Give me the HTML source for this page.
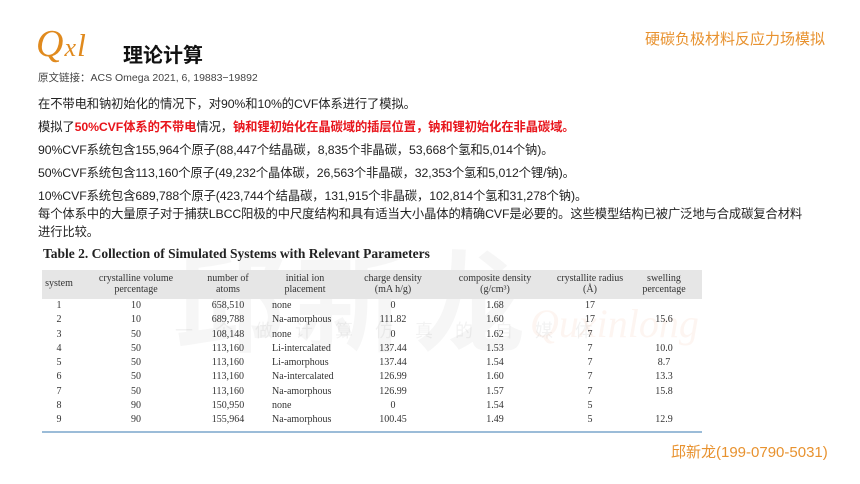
<!DOCTYPE html>
<html><head><meta charset="utf-8"><style>
body{margin:0;width:860px;height:484px;background:#fff;position:relative;overflow:hidden;font-family:"Liberation Sans","Noto Sans CJK SC",sans-serif;color:#222}
.a{position:absolute;white-space:nowrap}
.p{font-size:12.3px;line-height:18px;left:38px;letter-spacing:-0.1px}
.red{color:#e8141b;font-weight:bold}
table{position:absolute;left:42px;top:270px;width:660px;border-collapse:collapse;font-family:"Liberation Serif",serif;font-size:10px;color:#333;table-layout:fixed}
th{background:#e6e6e6;font-weight:normal;line-height:10.5px;padding:4px 0 4px;height:19px}
td{height:14.3px;padding:0;line-height:14.3px;text-align:center}
td.l{text-align:left;padding-left:12px}
th.l{text-align:left;padding-left:12px}
</style></head><body>
<div class="a" style="left:36px;top:22px;font-family:'Liberation Serif',serif;font-style:italic;font-size:38px;color:#e08a1e;letter-spacing:1px">Q<span style="font-size:26px">x</span><span style="font-size:32px">l</span></div>
<div class="a" style="left:123px;top:39px;font-size:20px;font-weight:bold;color:#111">理论计算</div>
<div class="a" style="left:38px;top:70px;font-size:10.5px;color:#444">原文链接：ACS Omega 2021, 6, 19883−19892</div>
<div class="a" style="left:645px;top:28px;font-size:15px;color:#e8922f">硬碳负极材料反应力场模拟</div>
<div class="a" style="left:175px;top:215px;font-size:110px;font-weight:bold;color:rgba(0,0,0,0.035);letter-spacing:10px">邱新龙</div>
<div class="a" style="left:175px;top:317px;font-size:18px;color:rgba(0,0,0,0.05);letter-spacing:22px">一个做计算仿真的自媒体</div>
<div class="a" style="left:530px;top:300px;font-family:'Liberation Serif',serif;font-style:italic;font-size:40px;color:rgba(230,120,60,0.07)">Quxinlong</div>
<div class="a p" style="top:95px">在不带电和钠初始化的情况下，对90%和10%的CVF体系进行了模拟。</div>
<div class="a p" style="top:118px">模拟了<span class="red">50%CVF体系的不带电</span>情况，<span class="red">钠和锂初始化在晶碳域的插层位置，钠和锂初始化在非晶碳域。</span></div>
<div class="a p" style="top:141px">90%CVF系统包含155,964个原子(88,447个结晶碳，8,835个非晶碳，53,668个氢和5,014个钠)。</div>
<div class="a p" style="top:164px">50%CVF系统包含113,160个原子(49,232个晶体碳，26,563个非晶碳，32,353个氢和5,012个锂/钠)。</div>
<div class="a p" style="top:187px">10%CVF系统包含689,788个原子(423,744个结晶碳，131,915个非晶碳，102,814个氢和31,278个钠)。</div>
<div class="a p" style="top:205px">每个体系中的大量原子对于捕获LBCC阳极的中尺度结构和具有适当大小晶体的精确CVF是必要的。这些模型结构已被广泛地与合成碳复合材料</div>
<div class="a p" style="top:223px">进行比较。</div>
<div class="a" style="left:43px;top:246px;font-family:'Liberation Serif',serif;font-weight:bold;font-size:13.5px;color:#222">Table 2. Collection of Simulated Systems with Relevant Parameters</div>
<table>
<colgroup><col style="width:34px"><col style="width:120px"><col style="width:64px"><col style="width:90px"><col style="width:86px"><col style="width:118px"><col style="width:72px"><col style="width:76px"></colgroup>
<tr><th>system</th><th>crystalline volume<br>percentage</th><th>number of<br>atoms</th><th>initial ion<br>placement</th><th>charge density<br>(mA h/g)</th><th>composite density<br>(g/cm³)</th><th>crystallite radius<br>(Å)</th><th>swelling<br>percentage</th></tr>
<tr><td>1</td><td>10</td><td>658,510</td><td class="l">none</td><td>0</td><td>1.68</td><td>17</td><td></td></tr>
<tr><td>2</td><td>10</td><td>689,788</td><td class="l">Na-amorphous</td><td>111.82</td><td>1.60</td><td>17</td><td>15.6</td></tr>
<tr><td>3</td><td>50</td><td>108,148</td><td class="l">none</td><td>0</td><td>1.62</td><td>7</td><td></td></tr>
<tr><td>4</td><td>50</td><td>113,160</td><td class="l">Li-intercalated</td><td>137.44</td><td>1.53</td><td>7</td><td>10.0</td></tr>
<tr><td>5</td><td>50</td><td>113,160</td><td class="l">Li-amorphous</td><td>137.44</td><td>1.54</td><td>7</td><td>8.7</td></tr>
<tr><td>6</td><td>50</td><td>113,160</td><td class="l">Na-intercalated</td><td>126.99</td><td>1.60</td><td>7</td><td>13.3</td></tr>
<tr><td>7</td><td>50</td><td>113,160</td><td class="l">Na-amorphous</td><td>126.99</td><td>1.57</td><td>7</td><td>15.8</td></tr>
<tr><td>8</td><td>90</td><td>150,950</td><td class="l">none</td><td>0</td><td>1.54</td><td>5</td><td></td></tr>
<tr><td>9</td><td>90</td><td>155,964</td><td class="l">Na-amorphous</td><td>100.45</td><td>1.49</td><td>5</td><td>12.9</td></tr>
</table>
<div class="a" style="left:42px;top:431px;width:660px;height:1.5px;background:#9bbcd8"></div>
<div class="a" style="left:671px;top:441px;font-size:15px;color:#e8922f">邱新龙(199-0790-5031)</div>
</body></html>
